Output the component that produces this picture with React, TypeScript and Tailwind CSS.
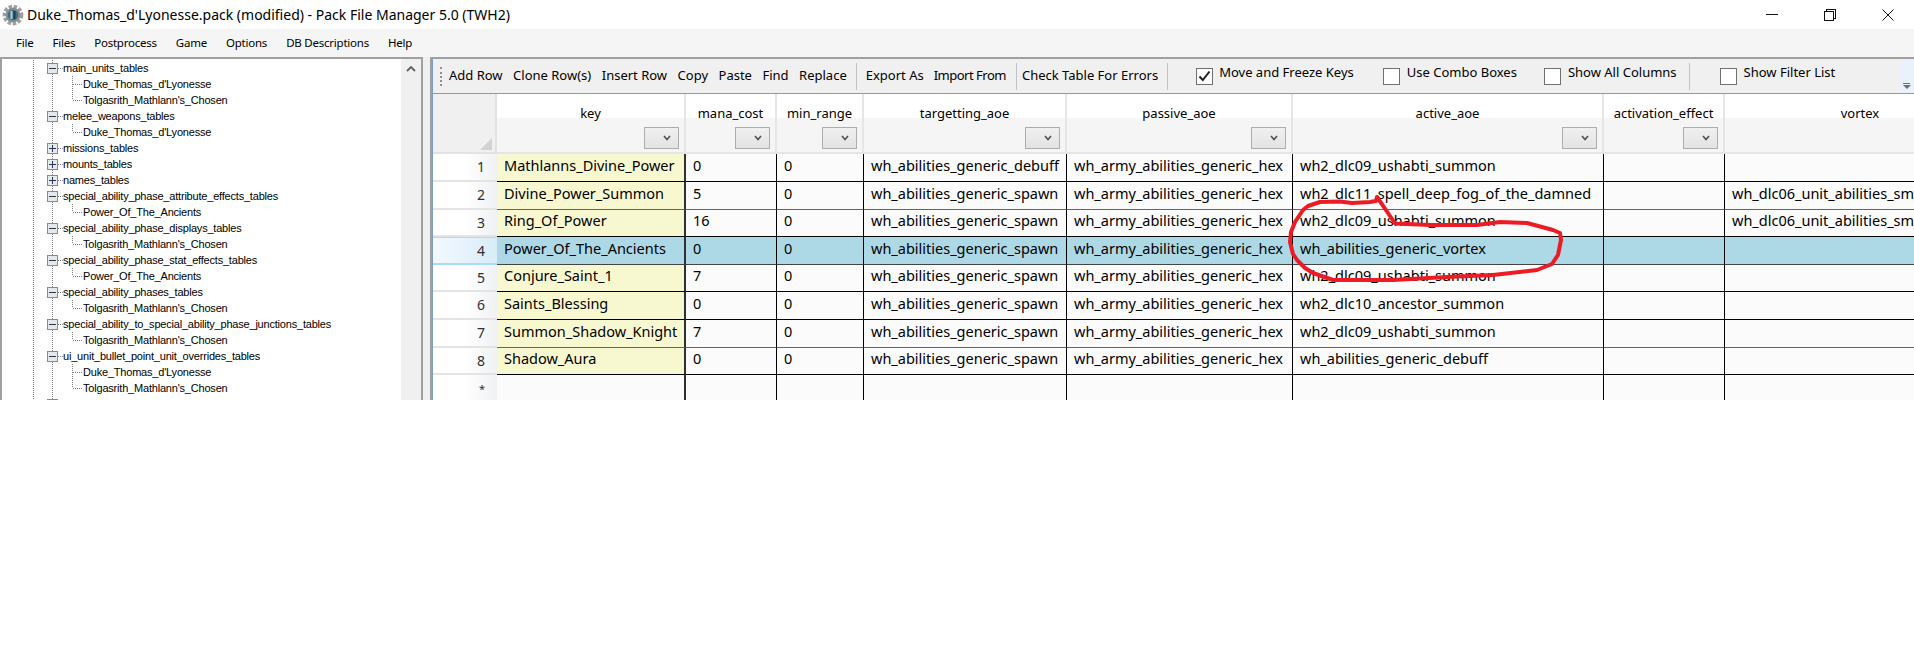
const segoe = "font-['Noto_Sans',sans-serif]";

type TreeRow = { label: string; kind: "open" | "closed" | "child" | "last" };

const tree: TreeRow[] = [
  { label: "main_units_tables", kind: "open" },
  { label: "Duke_Thomas_d'Lyonesse", kind: "child" },
  { label: "Tolgasrith_Mathlann's_Chosen", kind: "last" },
  { label: "melee_weapons_tables", kind: "open" },
  { label: "Duke_Thomas_d'Lyonesse", kind: "last" },
  { label: "missions_tables", kind: "closed" },
  { label: "mounts_tables", kind: "closed" },
  { label: "names_tables", kind: "closed" },
  { label: "special_ability_phase_attribute_effects_tables", kind: "open" },
  { label: "Power_Of_The_Ancients", kind: "last" },
  { label: "special_ability_phase_displays_tables", kind: "open" },
  { label: "Tolgasrith_Mathlann's_Chosen", kind: "last" },
  { label: "special_ability_phase_stat_effects_tables", kind: "open" },
  { label: "Power_Of_The_Ancients", kind: "last" },
  { label: "special_ability_phases_tables", kind: "open" },
  { label: "Tolgasrith_Mathlann's_Chosen", kind: "last" },
  { label: "special_ability_to_special_ability_phase_junctions_tables", kind: "open" },
  { label: "Tolgasrith_Mathlann's_Chosen", kind: "last" },
  { label: "ui_unit_bullet_point_unit_overrides_tables", kind: "open" },
  { label: "Duke_Thomas_d'Lyonesse", kind: "child" },
  { label: "Tolgasrith_Mathlann's_Chosen", kind: "last" },
  { label: "ui_unit_group_parents_to_groups_junctions_tables", kind: "open" },
];

function TreeGlyph({ kind }: { kind: TreeRow["kind"] }) {
  const parent = kind === "open" || kind === "closed";
  const w = parent ? 61 : 81;
  return (
    <svg width={w} height={16} className="shrink-0" shapeRendering="crispEdges">
      <line x1="31.5" y1="0" x2="31.5" y2="16" stroke="#808080" strokeDasharray="1 1" />
      <line x1="50.5" y1="0" x2="50.5" y2="16" stroke="#808080" strokeDasharray="1 1" />
      {parent ? (
        <>
          <rect x="45.5" y="3.5" width="10" height="10" fill="#e8e8e8" stroke="#8a8a8a" />
          <line x1="47" y1="8.5" x2="54" y2="8.5" stroke="#1e3a5a" />
          {kind === "closed" && <line x1="50.5" y1="5" x2="50.5" y2="12" stroke="#1e3a5a" />}
          <line x1="56" y1="8.5" x2="61" y2="8.5" stroke="#808080" strokeDasharray="1 1" />
        </>
      ) : (
        <>
          <line x1="70.5" y1="0" x2="70.5" y2={kind === "last" ? 8 : 16} stroke="#808080" strokeDasharray="1 1" />
          <line x1="71" y1="8.5" x2="80" y2="8.5" stroke="#808080" strokeDasharray="1 1" />
        </>
      )}
    </svg>
  );
}

function Tree() {
  return (
    <div className="flex h-full w-[423px] shrink-0 border-x-2 border-t-2 border-[#a0a0a0] bg-white">
      <div className="min-w-0 flex-1 overflow-hidden pt-px">
        {tree.map((r, i) => (
          <div key={i} className="flex h-4 items-center whitespace-nowrap font-['Liberation_Sans',sans-serif] text-[11px] leading-4 tracking-[-0.2px] text-black">
            <TreeGlyph kind={r.kind} />
            <span>{r.label}</span>
          </div>
        ))}
      </div>
      <div className="flex w-[20px] shrink-0 justify-center bg-[#f0f0f0] pt-[7px]">
        <svg width="10" height="6" viewBox="0 0 10 6" fill="none">
          <path d="M1 5 L5 1 L9 5" stroke="#606060" strokeWidth="1.8" />
        </svg>
      </div>
    </div>
  );
}

function Check({ checked }: { checked?: boolean }) {
  return (
    <span className="flex h-[17px] w-[17px] shrink-0 items-center justify-center border border-[#707070] bg-white">
      {checked && (
        <svg width="13" height="12" viewBox="0 0 13 12" fill="none">
          <path d="M1.5 6.5 L4.8 10 L11.5 1.5" stroke="#202020" strokeWidth="2" />
        </svg>
      )}
    </span>
  );
}

const Sep = ({ className }: { className: string }) => <span className={`h-[27px] w-px shrink-0 bg-[#c0c4c8] ${className}`} />;

function Toolbar() {
  const group1 = ["Add Row", "Clone Row(s)", "Insert Row", "Copy", "Paste", "Find", "Replace"];
  return (
    <div className={`relative flex h-[34px] shrink-0 items-center whitespace-nowrap bg-[#f0f0f0] text-[13px] text-black ${segoe}`}>
      <span className="ml-[7px] mr-[7px] h-[19px] w-[2px] shrink-0 border-l-2 border-dotted border-[#909090]" />
      <div className="flex gap-[10.5px]">
        {group1.map((t) => <span key={t}>{t}</span>)}
      </div>
      <Sep className="ml-[9px]" />
      <span className="ml-[9px]">Export As</span>
      <span className="ml-[10px] tracking-[-0.5px]">Import From</span>
      <Sep className="ml-[10px]" />
      <span className="ml-[5px]">Check Table For Errors</span>
      <Sep className="ml-[9px]" />
      <span className="ml-[28px]"><Check checked /></span>
      <span className="ml-[6px] -mt-[6px]">Move and Freeze Keys</span>
      <span className="ml-[29px]"><Check /></span>
      <span className="ml-[7px] -mt-[6px]">Use Combo Boxes</span>
      <span className="ml-[27px]"><Check /></span>
      <span className="ml-[7px] -mt-[6px]">Show All Columns</span>
      <Sep className="ml-[12px]" />
      <span className="ml-[30px]"><Check /></span>
      <span className="ml-[7px] -mt-[6px]">Show Filter List</span>
      <div className="ml-auto flex h-full w-[15px] shrink-0 flex-col items-center justify-end bg-[#e9f1fa] pb-[4px]">
        <span className="mb-px h-px w-[7px] bg-[#707070]" />
        <span className="h-0 w-0 border-x-[4px] border-t-[4px] border-x-transparent border-t-[#707070]" />
      </div>
    </div>
  );
}

const columns = [
  { name: "key", w: "w-[189px]" },
  { name: "mana_cost", w: "w-[91px]" },
  { name: "min_range", w: "w-[87px]" },
  { name: "targetting_aoe", w: "w-[203px]" },
  { name: "passive_aoe", w: "w-[226px]" },
  { name: "active_aoe", w: "w-[311px]" },
  { name: "activation_effect", w: "w-[121px]" },
  { name: "vortex", w: "w-[272px]" },
];

type Row = { id: string; h: string; cells: string[]; line: string };
const spawn = "wh_abilities_generic_spawn";
const hex = "wh_army_abilities_generic_hex";
const smoke = "wh_dlc06_unit_abilities_smoke_bomb";

const rows: Row[] = [
  { id: "1", h: "h-[28px]", line: "border-b-black", cells: ["Mathlanns_Divine_Power", "0", "0", "wh_abilities_generic_debuff", hex, "wh2_dlc09_ushabti_summon", "", ""] },
  { id: "2", h: "h-[28px]", line: "border-b-[#666666]", cells: ["Divine_Power_Summon", "5", "0", spawn, hex, "wh2_dlc11_spell_deep_fog_of_the_damned", "", smoke] },
  { id: "3", h: "h-[27px]", line: "border-b-black", cells: ["Ring_Of_Power", "16", "0", spawn, hex, "wh2_dlc09_ushabti_summon", "", smoke] },
  { id: "4", h: "h-[28px]", line: "border-b-[#444444]", cells: ["Power_Of_The_Ancients", "0", "0", spawn, hex, "wh_abilities_generic_vortex", "", ""] },
  { id: "5", h: "h-[27px]", line: "border-b-black", cells: ["Conjure_Saint_1", "7", "0", spawn, hex, "wh2_dlc09_ushabti_summon", "", ""] },
  { id: "6", h: "h-[28px]", line: "border-b-black", cells: ["Saints_Blessing", "0", "0", spawn, hex, "wh2_dlc10_ancestor_summon", "", ""] },
  { id: "7", h: "h-[28px]", line: "border-b-[#666666]", cells: ["Summon_Shadow_Knight", "7", "0", spawn, hex, "wh2_dlc09_ushabti_summon", "", ""] },
  { id: "8", h: "h-[27px]", line: "border-b-black", cells: ["Shadow_Aura", "0", "0", spawn, hex, "wh_abilities_generic_debuff", "", ""] },
  { id: "*", h: "h-[27px]", line: "border-b-transparent", cells: ["", "", "", "", "", "", "", ""] },
];

function Combo() {
  return (
    <span className="flex h-[22px] w-[35px] items-center justify-end border border-[#adadad] bg-gradient-to-b from-[#f0f0f0] to-[#e3e3e3] pr-[7px]">
      <svg width="8" height="6" viewBox="0 0 8 6" fill="none">
        <path d="M1 1 L4 4.5 L7 1" stroke="#505050" strokeWidth="1.6" />
      </svg>
    </span>
  );
}

function Grid() {
  return (
    <div className="min-h-0 flex-1 overflow-hidden border-t border-[#7f9db9] bg-white">
      <table className={`w-[1564px] table-fixed border-separate border-spacing-0 text-black ${segoe}`}>
        <colgroup>
          <col className="w-[64px]" />
          {columns.map((c) => <col key={c.name} className={c.w} />)}
        </colgroup>
        <thead>
          <tr className="h-[60px]">
            <th className="border-b-2 border-r-2 border-[#e2e2e2] bg-[#f0f0f0] p-0 align-bottom">
              <div className="flex justify-end pb-[2px] pr-[3px]">
                <svg width="12" height="12" viewBox="0 0 12 12"><path d="M12 0 V12 H0 Z" fill="#d2d2d2" /></svg>
              </div>
            </th>
            {columns.map((c) => (
              <th key={c.name} className="border-b-2 border-r-2 border-[#e6e6e6] bg-[linear-gradient(to_bottom,#ffffff_0,#ffffff_24px,#f5f5f5_24px,#f5f5f5_100%)] p-0 align-top text-[13px] font-normal">
                <div className="flex h-[58px] flex-col items-center">
                  <span className="mt-[9px] h-[22px] leading-[20px]">{c.name}</span>
                  {c.name !== "vortex" && (
                    <span className="flex w-full justify-end pr-[5px] pt-[2px]"><Combo /></span>
                  )}
                </div>
              </th>
            ))}
          </tr>
        </thead>
        <tbody className="text-[14.5px]">
          {rows.map((r) => {
            const sel = r.id === "4";
            return (
              <tr key={r.id} className={r.h}>
                <td className={`border-b-2 p-0 pb-px pr-[12px] text-right text-[14px] ${sel ? "border-y border-[#a8dcfa] bg-gradient-to-r from-[#f2f9fe] to-[#d9ecf9] text-[#303030]" : "border-[#e4e4e4] bg-gradient-to-r from-white via-white to-[#eff1f4] text-[#303030]"}`}>
                  {r.id === "*" ? <span className="text-[11px]">*</span> : r.id}
                </td>
                {r.cells.map((c, i) => (
                  <td
                    key={i}
                    className={`overflow-hidden whitespace-nowrap border-b border-r p-0 pb-[4px] pl-[7px] ${r.line} ${i === 0 ? "border-r-2 border-r-[#303030]" : "border-r-black"} ${sel ? "bg-[#add8e6]" : i === 0 && r.id !== "*" ? "bg-[#f8f8d0]" : "bg-[#fbfbfb]"}`}
                  >
                    {c}
                  </td>
                ))}
              </tr>
            );
          })}
        </tbody>
      </table>
    </div>
  );
}

export default function App() {
  return (
    <div className="relative h-[670px] w-[1914px] overflow-hidden bg-white">
      <div className="flex h-[29px] items-center bg-white">
        <svg width="22" height="22" viewBox="0 0 22 22" className="ml-[2px] mr-[3px] shrink-0">
          <circle cx="11" cy="11" r="8.4" fill="none" stroke="#a0a0a0" strokeWidth="4" strokeDasharray="3.4 1.6" />
          <circle cx="11" cy="11" r="7.4" fill="#8a8e92" />
          <circle cx="11" cy="11" r="5.2" fill="#3f6f80" />
          <rect x="8.5" y="7" width="2" height="8" fill="#a9d0da" />
          <rect x="11.5" y="7" width="2" height="8" fill="#12404f" />
        </svg>
        <span className={`whitespace-nowrap text-[14px] text-black ${segoe}`}>Duke_Thomas_d'Lyonesse.pack (modified) - Pack File Manager 5.0 (TWH2)</span>
        <div className="ml-auto flex items-center gap-[46px] pr-[20px]">
          <svg width="12" height="12" viewBox="0 0 12 12" shapeRendering="crispEdges"><path d="M0 5.5 H12" stroke="#111" /></svg>
          <svg width="12" height="12" viewBox="0 0 12 12" fill="none" shapeRendering="crispEdges"><path d="M0.5 2.5 H9.5 V11.5 H0.5 Z M2.5 2.5 V0.5 H11.5 V9.5 H9.5" stroke="#111" /></svg>
          <svg width="12" height="12" viewBox="0 0 12 12" fill="none"><path d="M0.5 0.5 L11.5 11.5 M11.5 0.5 L0.5 11.5" stroke="#111" /></svg>
        </div>
      </div>

      <div className={`flex h-[28px] items-center gap-[19px] bg-[#f5f5f5] pl-[16px] text-[11.5px] tracking-[-0.23px] text-black ${segoe}`}>
        {["File", "Files", "Postprocess", "Game", "Options", "DB Descriptions", "Help"].map((m) => <span key={m}>{m}</span>)}
      </div>

      <div className="flex h-[343px] bg-[#f0f0f0]">
        <Tree />
        <div className="ml-[7px] flex min-w-0 flex-1 flex-col border-l-2 border-t-2 border-[#a0a0a0]">
          <div className="flex h-full min-h-0 flex-col border-l border-[#7f9db9]">
            <Toolbar />
            <Grid />
          </div>
        </div>
      </div>

      <svg className="pointer-events-none absolute inset-0" width="1914" height="670" fill="none">
        <path
          d="M1377 197 L1376 201 L1370 202 L1352 203 L1340 201.5 L1320 202 L1308 206 L1303 210 L1295 222 L1291 232 L1290 242 L1293 254 L1297 260 L1305 268 L1313 273 L1333 280 L1393 280 L1447 277 L1493 275 L1537 270 L1552 264 L1558 255 L1561 240 L1560 233 L1553 230 L1527 223 L1500 222 L1477 225 L1430 225 L1395 223.5 L1388 213 L1377 197"
          stroke="#ed1c24"
          strokeWidth="4"
          strokeLinecap="round"
          strokeLinejoin="round"
        />
      </svg>
    </div>
  );
}
